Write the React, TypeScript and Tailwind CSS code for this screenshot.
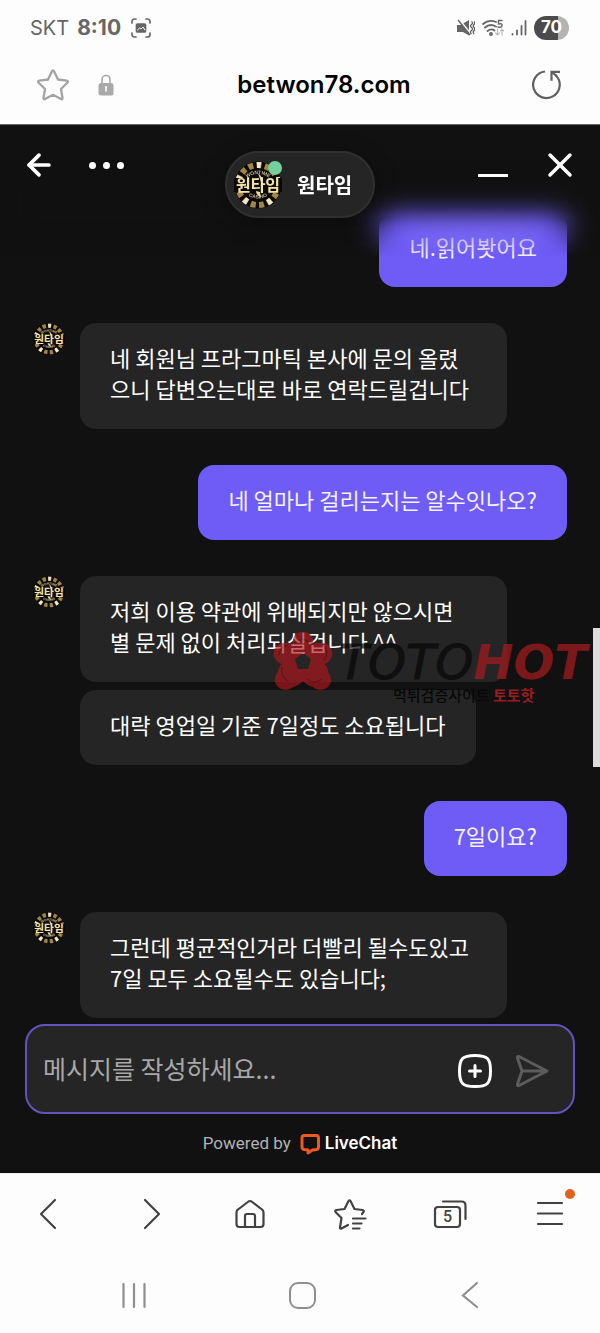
import React, { useId } from "react";
import { ArrowLeft, X } from "lucide-react";

interface Message {
  text: string;
}

interface MessageGroup {
  from: "agent" | "visitor";
  messages: Message[];
}

const groups: MessageGroup[] = [
  { from: "visitor", messages: [{ text: "네.읽어봣어요" }] },
  {
    from: "agent",
    messages: [
      {
        text: "네 회원님 프라그마틱 본사에 문의 올렸으니 답변오는대로 바로 연락드릴겁니다",
      },
    ],
  },
  { from: "visitor", messages: [{ text: "네 얼마나 걸리는지는 알수잇나오?" }] },
  {
    from: "agent",
    messages: [
      {
        text: "저희 이용 약관에 위배되지만 않으시면 별 문제 없이 처리되실겁니다 ^^",
      },
      { text: "대략 영업일 기준 7일정도 소요됩니다" },
    ],
  },
  { from: "visitor", messages: [{ text: "7일이요?" }] },
  {
    from: "agent",
    messages: [
      {
        text: "그런데 평균적인거라 더빨리 될수도있고 7일 모두 소요될수도 있습니다;",
      },
    ],
  },
];

const Avatar = ({ className }: { className: string }) => {
  const id = useId();
  return (
    <svg viewBox="0 0 48 48" className={className} aria-hidden="true">
      <circle cx="24" cy="24" r="23.5" fill="#0b0806" />
      <circle
        cx="24"
        cy="24"
        r="20"
        fill="none"
        stroke="#a08548"
        strokeWidth="6"
        strokeDasharray="5 3.38"
      />
      <circle
        cx="24"
        cy="24"
        r="20"
        fill="none"
        stroke="#f1e6cf"
        strokeWidth="6"
        strokeDasharray="4 21.13"
        strokeDashoffset="8"
      />
      <path id={id + "t"} d="M11 18q13-10 26 0" fill="none" />
      <path id={id + "b"} d="M11 33q13 9 26 0" fill="none" />
      <g
        fill="#c5b896"
        fontSize="5"
        fontWeight="700"
        textAnchor="middle"
        fontFamily="Liberation Sans, sans-serif"
      >
        <text>
          <textPath href={"#" + id + "t"} startOffset="50%">
            WONTIME
          </textPath>
        </text>
        <text>
          <textPath href={"#" + id + "b"} startOffset="50%">
            CASINO
          </textPath>
        </text>
      </g>
      <rect x="0" y="17" width="48" height="14" fill="#0b0806" />
      <path d="M24 12q6 5 3 9l-1-3zM22 30q0 4 5 6-1-3-1-5z" fill="#e8d9a4" />
      <text
        x="24"
        y="29.500"
        fill="#f3e5a8"
        fontSize="16"
        fontWeight="700"
        textAnchor="middle"
        fontFamily="Noto Sans CJK KR, sans-serif"
      >
        원타임
      </text>
    </svg>
  );
};

const StatusBar = () => (
  <div className="flex h-14 items-center justify-between pr-[31px] pl-[30px] text-[#666]">
    <div className="flex items-center gap-2 text-xl">
      <span>SKT</span>
      <span className="text-[21px] font-bold">8:10</span>
      <svg viewBox="0 0 20 20" className="ml-0.5 size-5" fill="none" stroke="currentColor" strokeWidth="1.700" strokeLinecap="round">
        <path d="M1 5V3.500A2.500 2.500 0 0 1 3.500 1H5M15 1h1.500A2.500 2.500 0 0 1 19 3.500V5M19 15v1.500a2.500 2.500 0 0 1-2.500 2.500H15M5 19H3.500A2.500 2.500 0 0 1 1 16.500V15" />
        <rect x="5.500" y="6" width="9" height="8" rx="1" fill="currentColor" />
        <path d="m6.500 12 2-2 1.500 1 2-2 2 3" stroke="#fff" strokeWidth="1" />
      </svg>
    </div>
    <div className="flex items-center gap-[7px]">
      <svg viewBox="0 0 18 18" className="size-[18px]" fill="currentColor">
        <path d="M0 6h3.500L12 1v15.500L6 13H0z" />
        <path d="m2 0 12 15" stroke="#fdfdfd" strokeWidth="1.500" />
        <path d="m1 1 12 15M14.500 2.500q2 1.500 0 3t0 3 0 3 0 3.500M17 2.500q1.500 1.500 0 3t0 3 0 3 0 3.500" stroke="currentColor" strokeWidth="1.400" fill="none" />
      </svg>
      <svg viewBox="0 0 22 18" className="h-[18px] w-[22px]" fill="none" stroke="currentColor" strokeWidth="1.900" strokeLinecap="round">
        <path d="M1 5q6-5 13-2M3 8.500q5-4.500 11-1M5.500 12q4-3 7-.5" />
        <circle cx="9" cy="15" r="1" fill="currentColor" />
        <path d="M20 1.500h-3.500V5q4-1 3.500 1.500T16 8" strokeWidth="1.500" />
        <path d="M15.500 10v6m-2-2 2 2 2-2M20 16v-6m-1.500 2 1.500-2 1.500 2" stroke="#bbb" strokeWidth="1.200" />
      </svg>
      <svg viewBox="0 0 16 16" className="size-4" stroke="currentColor" strokeWidth="1.800" strokeLinecap="round">
        <path d="M1.500 14.500V14M6 14.500v-4M10.500 14.500V6M14.500 14.500V1" />
      </svg>
      <span className="flex h-6 w-[35px] items-center justify-center rounded-full bg-linear-to-r from-[#4b4b4b] from-70% to-[#b4b4b4] to-70% text-[17px] font-bold text-white">
        70
      </span>
    </div>
  </div>
);

const AddressBar = () => (
  <div className="grid h-[69px] grid-cols-[1fr_auto_1fr] items-center border-b border-[#666] px-9 pb-2.5">
    <div className="flex items-center gap-7">
      <button aria-label="북마크" className="text-[#a3a3a3]">
        <svg viewBox="0 0 34 34" className="size-[34px]" fill="none" stroke="currentColor" strokeWidth="2.300" strokeLinejoin="round">
          <path d="M16 3.200q1-1.800 2 0l4 8.300 8.600 1.200q2.200.5.700 2l-6.300 6.300 1.500 9q.2 1.800-1.500 1L17 26.800 9 31q-1.700.8-1.500-1l1.500-9-6.300-6.300q-1.500-1.500.7-2l8.600-1.200z" />
        </svg>
      </button>
      <svg viewBox="0 0 16 22" className="h-[22px] w-4" fill="#a9a9a9">
        <path d="M4 10V5.500a4 4 0 0 1 8 0V10" fill="none" stroke="#a9a9a9" strokeWidth="1.600" />
        <rect x="0.500" y="9" width="15" height="12.500" rx="2.500" />
        <path d="M8 13v4.500M7 13h2" stroke="#fff" strokeWidth="1.600" />
      </svg>
    </div>
    <span className="pl-12 text-2xl font-semibold text-black">betwon78.com</span>
    <button aria-label="새로고침" className="justify-self-end pr-0.5 text-[#606060]">
      <svg viewBox="0 0 30 30" className="size-[30px]" fill="none" stroke="currentColor" strokeWidth="2.200">
        <path d="M13 1.500A13.300 13.300 0 1 0 23.500 5" />
        <path d="M28 1.800h-8.500v9M20 2l4.500 4" />
      </svg>
    </button>
  </div>
);

const ChatHeader = () => (
  <header className="absolute inset-x-0 top-0 z-10 h-[150px]">
    <div className="absolute inset-0 bg-linear-to-b from-[#111] from-20% to-transparent to-60% [mask-image:linear-gradient(#000_62%,transparent_88%)] backdrop-blur-[14px]" />
    <div className="relative grid grid-cols-[1fr_auto_1fr] px-6 pt-[26px] text-white">
      <div className="flex h-7 items-center gap-[33px]">
        <button aria-label="뒤로">
          <ArrowLeft className="-ml-0.5 size-[34px]" strokeWidth={2.6} />
        </button>
        <button aria-label="메뉴" className="flex gap-[7px]">
          <span className="size-[7px] rounded-full bg-white" />
          <span className="size-[7px] rounded-full bg-white" />
          <span className="size-[7px] rounded-full bg-white" />
        </button>
      </div>
      <div className="flex h-[67px] w-[150px] items-center gap-[15px] rounded-full border-2 border-[#303030] bg-[#252525] pl-[7px] shadow-[0_4px_24px_#0004]">
        <div className="relative">
          <Avatar className="size-12" />
          <span className="absolute top-0 right-0 size-[14px] rounded-full bg-[#73cf9c]" />
        </div>
        <h1 className="text-xl font-bold">원타임</h1>
      </div>
      <div className="flex h-7 items-center justify-end gap-9">
        <button aria-label="최소화" className="h-6 w-[30px] border-b-3 border-white" />
        <button aria-label="닫기">
          <X className="-m-1 size-10" strokeWidth={2.1} />
        </button>
      </div>
    </div>
  </header>
);

const Bubble = ({ text, visitor }: { text: string; visitor: boolean }) => (
  <p
    className={
      "max-w-[427px] rounded-2xl px-[30px] pt-[19px] pb-[25px] text-[22px] leading-[31px] " +
      (visitor ? "bg-[#6f5bf5] text-[#f4f2ff]" : "bg-[#252525] text-white")
    }
  >
    {text}
  </p>
);

const Watermark = () => (
  <div className="pointer-events-none absolute top-[502px] right-0 flex w-[329px] gap-1" aria-hidden="true">
    <svg viewBox="0 0 64 64" className="size-16 shrink-0 opacity-65" fill="#b3171c">
      <path
        fillRule="evenodd"
        d="M22 12a10.500 10.500 0 0 1 20 0q.5 4-1 6 4-3 9-2a10.500 10.500 0 0 1 9 17q-2 3-6 4 4 2 4 8a10.500 10.500 0 0 1-15 15q-5-1-10-6-5 5-10 6A10.500 10.500 0 0 1 7 45q0-5 4-8-4-1-6-4a10.500 10.500 0 0 1 9-17q5-1 9 2-1.500-2-1-6zM32 26l-8 6 3 10h10l3-10z"
      />
      <path
        d="M23 17q7-8 15-2M52 18q7 7 1 15M51 52q-8 6-15 0M17 54q-8-5-6-14M8 28q1-8 9-10"
        fill="none"
        stroke="#7a1216"
        strokeWidth="1.500"
      />
    </svg>
    <div className="pt-2">
      <div className="text-5xl leading-[54px] whitespace-nowrap text-[#060606] italic opacity-70 [-webkit-text-stroke:1px] [font-family:'DejaVu_Sans',sans-serif]">
        TOTO<span className="font-bold text-[#a81b1f] [-webkit-text-stroke:0]">HOT</span>
      </div>
      <div className="pl-[54px] text-[15px] leading-3 font-medium text-[#080808]">
        먹튀검증사이트 <span className="font-bold text-[#9b1d20]">토토핫</span>
      </div>
    </div>
  </div>
);

const Composer = () => (
  <form className="mx-[25px] mt-1.5 flex h-[90px] items-center rounded-[20px] border-2 border-[#6553bd] bg-[#252525] pr-[22px] pl-4">
    <input
      type="text"
      aria-label="메시지"
      placeholder="메시지를 작성하세요..."
      className="min-w-0 flex-1 text-[25px] text-white outline-none placeholder:text-[#a8a8a8]"
    />
    <div className="flex gap-[22px] pt-1">
      <button type="button" aria-label="첨부" className="text-white">
        <svg viewBox="0 0 36 36" className="size-9" fill="none" stroke="currentColor" strokeWidth="3" strokeLinecap="round">
          <path d="M18 2.500c12.500 0 15.500 3 15.500 15.500S30.500 33.500 18 33.500 2.500 30.500 2.500 18 5.500 2.500 18 2.500zM18 12.500v11M12.500 18h11" />
        </svg>
      </button>
      <button type="submit" aria-label="보내기" className="text-[#5c5c5c]">
        <svg viewBox="0 0 36 36" className="size-9" fill="none" stroke="currentColor" strokeWidth="3" strokeLinejoin="round">
          <path d="M2.500 5q-.5-2 1.500-1.500L32 18 4 32.500q-2 .5-1.500-1.500L7 18zM7 18h24" />
        </svg>
      </button>
    </div>
  </form>
);

const BrowserToolbar = () => (
  <nav className="grid h-20 grid-cols-6 place-items-center border-t border-[#eee] text-[#424242]">
    <button aria-label="이전">
      <svg viewBox="0 0 34 34" className="size-[34px]" fill="none" stroke="currentColor" strokeWidth="2.200" strokeLinecap="round" strokeLinejoin="round">
        <path d="M22 3 8 17l14 14" />
      </svg>
    </button>
    <button aria-label="다음">
      <svg viewBox="0 0 34 34" className="size-[34px]" fill="none" stroke="currentColor" strokeWidth="2.200" strokeLinecap="round" strokeLinejoin="round">
        <path d="m12 3 14 14-14 14" />
      </svg>
    </button>
    <button aria-label="홈">
      <svg viewBox="0 0 34 34" className="size-[34px]" fill="none" stroke="currentColor" strokeWidth="2.200" strokeLinejoin="round">
        <path d="M15.500 4.500q1.500-1 3 0L29 12.500q1.500 1 1.500 3V27q0 3-3 3h-21q-3 0-3-3V15.500q0-2 1.500-3zM12 30V19q0-2 2-2h6q2 0 2 2v11" />
      </svg>
    </button>
    <button aria-label="북마크 목록">
      <svg viewBox="0 0 34 34" className="size-[34px]" fill="none" stroke="currentColor" strokeWidth="2.200" strokeLinecap="round" strokeLinejoin="round">
        <path d="M15 28 8.500 31.500q-1.500.5-1.500-1l1.500-9.500-6-6q-1-1.500 1-2l8-1 4-8q1-1.500 2 0l4 8 8 1q2 .5 1 2l-1.500 2M20 21.500h12.500M20 26.500h8.500M20 31.500h6.500" />
      </svg>
    </button>
    <button aria-label="탭" className="relative">
      <svg viewBox="0 0 34 34" className="size-[34px]" fill="none" stroke="currentColor" strokeWidth="2.200" strokeLinecap="round">
        <rect x="2" y="10" width="25" height="20" rx="3" />
        <path d="M10 4.500h18.500q4 0 4 4V22" />
      </svg>
      <span className="absolute top-2.5 left-2.5 text-base leading-5 font-medium [font-family:Roboto,sans-serif]">5</span>
    </button>
    <button aria-label="더보기" className="relative">
      <svg viewBox="0 0 34 34" className="size-[34px]" stroke="currentColor" strokeWidth="2.200" strokeLinecap="round">
        <path d="M5 6h24M5 16.500h24M5 27h24" />
      </svg>
      <span className="absolute -top-2 -right-2 size-2.5 rounded-full bg-[#e2611c]" />
    </button>
  </nav>
);

const SystemNav = () => (
  <nav className="grid h-20 grid-cols-3 place-items-center pt-1 pr-[46px] pl-[50px] text-[#8f8f8f]">
    <button aria-label="최근 앱">
      <svg viewBox="0 0 28 28" className="size-7" stroke="currentColor" strokeWidth="2.200" strokeLinecap="round">
        <path d="M3.500 3v23M14 3v23M24.500 3v23" />
      </svg>
    </button>
    <button aria-label="홈 화면" className="size-[27px] rounded-[9px] border-2 border-[#8f8f8f]" />
    <button aria-label="뒤로 가기">
      <svg viewBox="0 0 28 28" className="size-7" fill="none" stroke="currentColor" strokeWidth="2.200" strokeLinecap="round">
        <path d="M21 2 7 14.500 21 26" />
      </svg>
    </button>
  </nav>
);

const App = () => {
  return (
    <div className="bg-[#fdfdfd] [font-family:Inter,'Noto_Sans_CJK_KR',sans-serif]">
      <StatusBar />
      <AddressBar />

      <main className="relative bg-[#111] [font-family:'Noto_Sans_CJK_KR',sans-serif]">
        <ChatHeader />
        <div className="flex flex-col gap-9 pt-[87px] pr-[33px] pl-[33px]">
          {groups.map((group, i) =>
            group.from === "visitor" ? (
              <div key={i} className="flex justify-end">
                <Bubble text={group.messages[0].text} visitor />
              </div>
            ) : (
              <div key={i} className="flex gap-[15px]">
                <Avatar className="size-8 shrink-0" />
                <div className="flex flex-col items-start gap-2">
                  {group.messages.map((message) => (
                    <Bubble key={message.text} text={message.text} visitor={false} />
                  ))}
                </div>
              </div>
            )
          )}
        </div>

        <Composer />

        <footer className="flex h-[59px] items-center justify-center text-[17px] text-[#b3b3b3] [font-family:Roboto,sans-serif]">
          Powered by
          <a href="#livechat" className="flex items-center gap-1 pl-2 font-semibold text-white [font-family:Inter,sans-serif]">
            <svg viewBox="0 0 22 22" className="size-[22px]" fill="none" stroke="#f0581e" strokeWidth="3" strokeLinejoin="round">
              <path d="M5 2.500h12q2.500 0 2.500 2.500v9q0 2-2 2.500l-4 .5-4.500 3V17l-4-.5q-2-.5-2-2.500V5Q3 2.500 5 2.500z" />
            </svg>
            LiveChat
          </a>
        </footer>

        <Watermark />
        <div className="absolute top-[503px] right-0 h-[139px] w-[7px] bg-[#dcdcdc]" />
      </main>

      <BrowserToolbar />
      <SystemNav />
    </div>
  );
};

export default App;
